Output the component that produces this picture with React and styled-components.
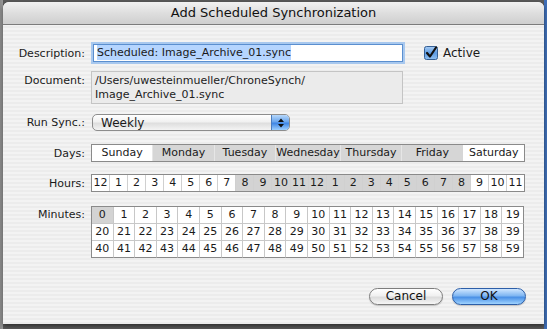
import styled, { createGlobalStyle } from "styled-components";

const GlobalStyle = createGlobalStyle`
  html, body {
    margin: 0;
    padding: 0;
  }
  body {
    width: 547px;
    height: 329px;
    overflow: hidden;
    background: linear-gradient(90deg, #8a8a8a 0, #9a9a9a 3px, #5a5a5a 3px, #5a5a5a 544px, #3f6fb8 544px);
    font-family: "DejaVu Sans", "Noto Sans", sans-serif;
  }
`;

const hourLabels = [12, 1, 2, 3, 4, 5, 6, 7, 8, 9, 10, 11, 12, 1, 2, 3, 4, 5, 6, 7, 8, 9, 10, 11];
const days = [
  { name: "Sunday", on: false },
  { name: "Monday", on: true },
  { name: "Tuesday", on: true },
  { name: "Wednesday", on: true },
  { name: "Thursday", on: true },
  { name: "Friday", on: true },
  { name: "Saturday", on: false },
];

const App = () => {
  const minutes = Array.from({ length: 60 }, (_, i) => i);
  return (
    <>
      <GlobalStyle />
      <Window>
        <TitleBar>Add Scheduled Synchronization</TitleBar>
        <Content>
          <Row $top={19}>
            <Label>Description:</Label>
            <TextField>
              <Selected>Scheduled: Image_Archive_01.sync</Selected>
            </TextField>
            <CheckWrap>
              <svg width="14" height="14" viewBox="0 0 14 14">
                <defs>
                  <linearGradient id="cb" x1="0" y1="0" x2="0" y2="1">
                    <stop offset="0" stopColor="#a9cdf4" />
                    <stop offset="0.5" stopColor="#5d9be3" />
                    <stop offset="1" stopColor="#8fc0f2" />
                  </linearGradient>
                </defs>
                <rect x="0.5" y="0.5" width="13" height="13" rx="2" fill="url(#cb)" stroke="#355f94" />
                <path d="M3 7 L6 10.5 L12 1.5" fill="none" stroke="#111" strokeWidth="2.2" strokeLinecap="round" strokeLinejoin="round" />
              </svg>
              <span>Active</span>
            </CheckWrap>
          </Row>
          <Row $top={9} $align="flex-start">
            <Label $pad={3}>Document:</Label>
            <PathBox>
              /Users/uwesteinmueller/ChroneSynch/
              <br />
              Image_Archive_01.sync
            </PathBox>
          </Row>
          <Row $top={10}>
            <Label>Run Sync.:</Label>
            <Popup>
              <span>Weekly</span>
              <PopupCap>
                <svg width="8" height="10" viewBox="0 0 8 10">
                  <path d="M4 0.5 L7 4 L1 4 Z M4 9.5 L7 6 L1 6 Z" fill="#111" />
                </svg>
              </PopupCap>
            </Popup>
          </Row>
          <Row $top={13}>
            <Label>Days:</Label>
            <Strip>
              {days.map((d) => (
                <DayCell key={d.name} $on={d.on}>
                  {d.name}
                </DayCell>
              ))}
            </Strip>
          </Row>
          <Row $top={12}>
            <Label>Hours:</Label>
            <Strip>
              {hourLabels.map((h, i) => (
                <HourCell key={i} $on={i >= 8 && i <= 20}>
                  {h}
                </HourCell>
              ))}
            </Strip>
          </Row>
          <Row $top={14} $align="flex-start">
            <Label $pad={2}>Minutes:</Label>
            <MinuteGrid>
              {minutes.map((m) => (
                <MinuteCell key={m} $on={m === 0}>
                  {m}
                </MinuteCell>
              ))}
            </MinuteGrid>
          </Row>
          <ButtonRow>
            <Button>Cancel</Button>
            <Button $primary>OK</Button>
          </ButtonRow>
        </Content>
      </Window>
    </>
  );
};

export default App;

const Window = styled.div`
  width: 541px;
  height: 322px;
  margin: 2px 0 0 3px;
  border-radius: 6px 6px 0 0;
  overflow: hidden;
  background: repeating-linear-gradient(
    180deg,
    #ececec 0,
    #ececec 2px,
    #f3f3f3 2px,
    #f3f3f3 4px
  );
  box-shadow: 0 2px 4px rgba(0, 0, 0, 0.5);
`;

const TitleBar = styled.div`
  height: 22px;
  line-height: 22px;
  text-align: center;
  font-size: 13px;
  color: #111;
  background: linear-gradient(180deg, #f2f2f2 0%, #dedede 50%, #cfcfcf 100%);
  border-bottom: 1px solid #7c7c7c;
`;

const Content = styled.div`
  display: flex;
  flex-direction: column;
  font-size: 11px;
  color: #1a1a1a;
`;

const Row = styled.div`
  display: flex;
  align-items: ${(p) => p.$align || "center"};
  margin-top: ${(p) => p.$top}px;
  gap: 6px;
`;

const Label = styled.div`
  width: 82px;
  text-align: right;
  padding-top: ${(p) => p.$pad || 0}px;
  flex-shrink: 0;
`;

const TextField = styled.div`
  width: 302px;
  height: 16px;
  line-height: 16px;
  padding: 0 3px;
  margin-left: 2px;
  background: #fff;
  border: 1px solid #5b8fcf;
  box-shadow: 0 0 0 2px #a8c8ee;
`;

const Selected = styled.span`
  background: #b5d5ff;
  padding: 1px 0;
`;

const CheckWrap = styled.div`
  display: flex;
  align-items: center;
  gap: 5px;
  margin-left: 15px;
  font-size: 12px;
  svg { display: block; }
`;

const PathBox = styled.div`
  width: 304px;
  height: 29px;
  padding: 2px 3px 0;
  line-height: 14px;
  background: #ebebeb;
  border: 1px solid #c4c4c4;
  color: #222;
`;

const Popup = styled.div`
  position: relative;
  width: 198px;
  height: 17px;
  display: flex;
  align-items: center;
  padding-left: 8px;
  margin-left: 1px;
  box-sizing: border-box;
  border: 1px solid #8d8d8d;
  border-radius: 5px;
  background: linear-gradient(180deg, #ffffff 0%, #f1f1f1 45%, #dedede 55%, #f4f4f4 100%);
  font-size: 12px;
  overflow: hidden;
`;

const PopupCap = styled.div`
  position: absolute;
  right: 0;
  top: 0;
  bottom: 0;
  width: 17px;
  display: flex;
  align-items: center;
  justify-content: center;
  background: linear-gradient(180deg, #b7d8fb 0%, #6aa6ee 45%, #3f86e4 55%, #9ed0ff 100%);
  border-left: 1px solid #4b7dbf;
`;

const Strip = styled.div`
  width: 432px;
  display: flex;
  border: 1px solid #8a8a8a;
  background: #fff;
`;

const DayCell = styled.div`
  flex: 1;
  height: 16px;
  line-height: 16px;
  text-align: center;
  font-size: 11px;
  background: ${(p) => (p.$on ? "#d6d6d6" : "#ffffff")};
  border-left: 1px solid ${(p) => (p.$on ? "#e6e6e6" : "#ffffff")};
  &:first-child { border-left: none; }
`;

const HourCell = styled.div`
  flex: 1;
  height: 16px;
  line-height: 16px;
  text-align: center;
  font-size: 11px;
  background: ${(p) => (p.$on ? "#d3d3d3" : "#ffffff")};
  border-left: 1px solid #d0d0d0;
  &:first-child { border-left: none; }
`;

const MinuteGrid = styled.div`
  width: 432px;
  display: grid;
  grid-template-columns: repeat(20, 1fr);
  border: 1px solid #8a8a8a;
  border-right: none;
  border-bottom: none;
  background: #fff;
`;

const MinuteCell = styled.div`
  height: 16px;
  line-height: 16px;
  text-align: center;
  font-size: 11px;
  background: ${(p) => (p.$on ? "#d3d3d3" : "#ffffff")};
  border-right: 1px solid #c8c8c8;
  border-bottom: 1px solid #c8c8c8;
  &:nth-child(20n) { border-right-color: #8a8a8a; }
  &:nth-child(n + 41) { border-bottom-color: #8a8a8a; }
`;

const ButtonRow = styled.div`
  display: flex;
  justify-content: flex-end;
  gap: 9px;
  margin-top: 30px;
  padding-right: 18px;
`;

const Button = styled.div`
  width: 74px;
  height: 17px;
  line-height: 15px;
  box-sizing: border-box;
  text-align: center;
  font-size: 12px;
  border-radius: 9px;
  border: 1px solid ${(p) => (p.$primary ? "#2c5ea8" : "#7d7d7d")};
  background: ${(p) =>
    p.$primary
      ? "linear-gradient(180deg, #cfe6ff 0%, #7fb6f2 45%, #4a90e6 55%, #9fd3ff 100%)"
      : "linear-gradient(180deg, #ffffff 0%, #f0f0f0 45%, #dcdcdc 55%, #f6f6f6 100%)"};
  color: #111;
  box-shadow: 0 1px 1px rgba(0, 0, 0, 0.2);
`;
